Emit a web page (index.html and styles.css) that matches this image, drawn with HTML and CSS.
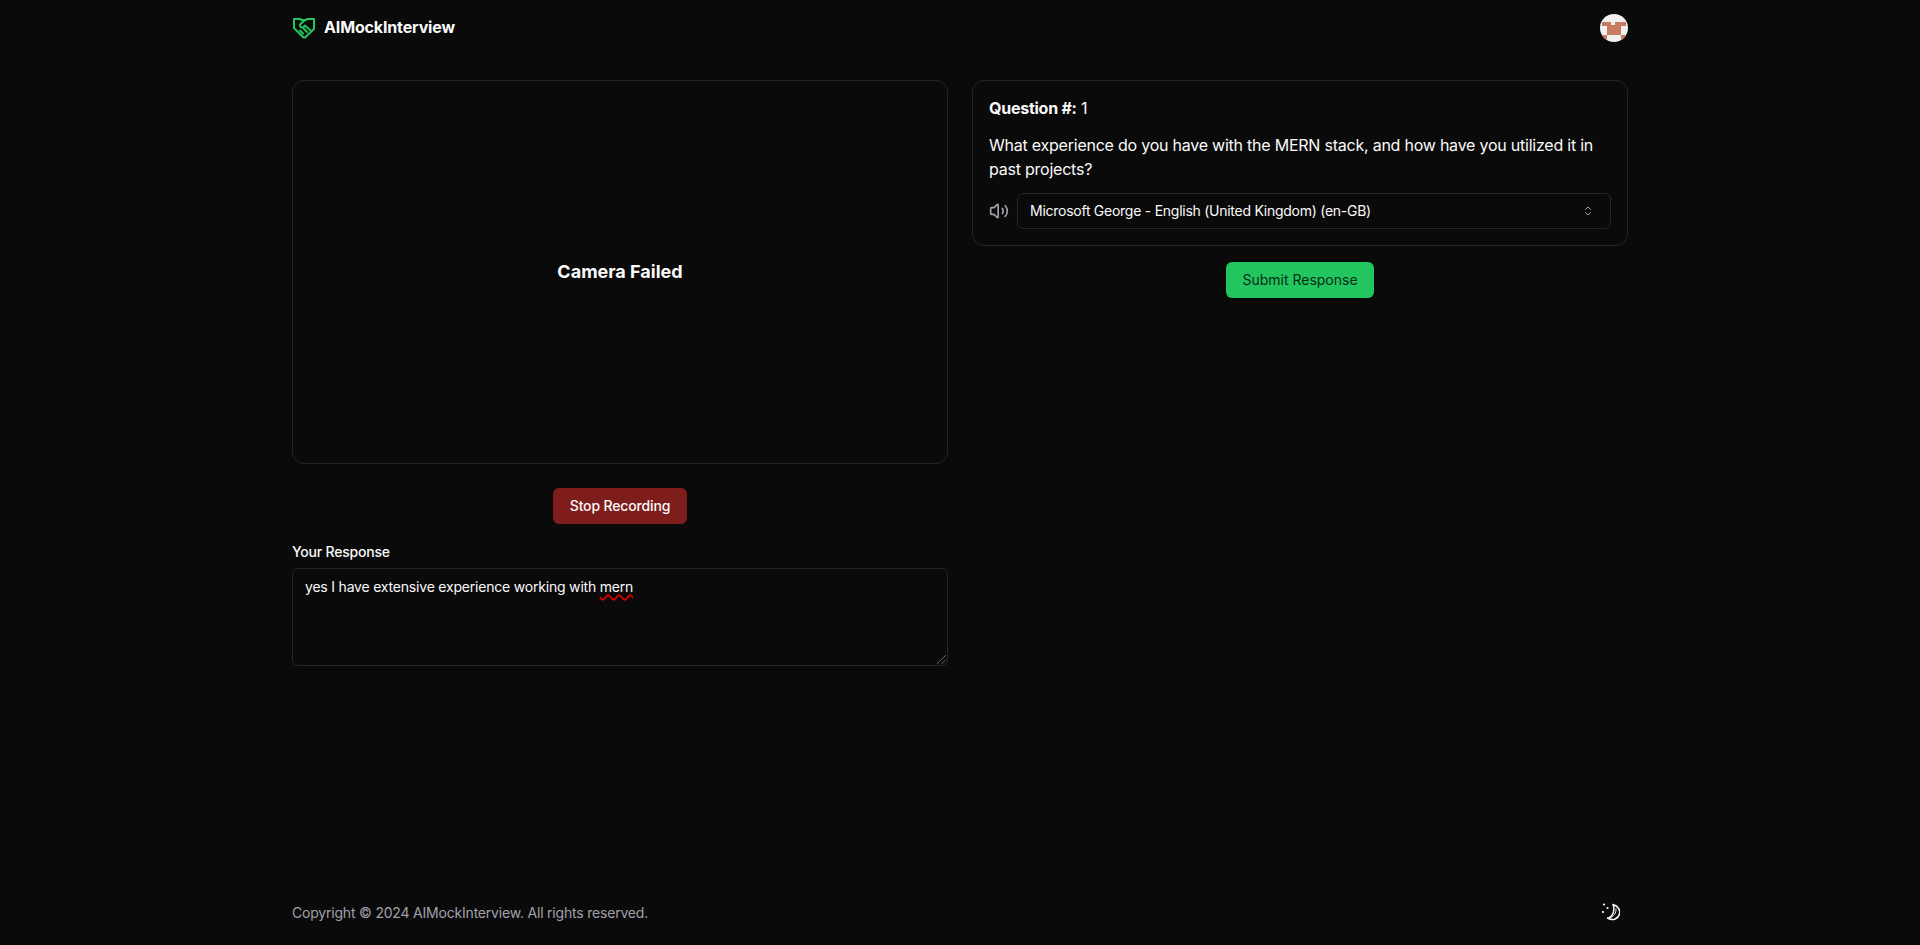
FILE: index.html
```html
<!DOCTYPE html>
<html lang="en">
<head>
<meta charset="utf-8">
<title>AIMockInterview</title>
<link rel="stylesheet" href="styles.css">
</head>
<body>
<div class="page">
  <header class="header">
    <a class="brand">
      <svg class="brand-icon" viewBox="0 0 24 24" fill="none" stroke="#22c55e" stroke-width="2" stroke-linecap="round" stroke-linejoin="round"><path d="M8 3 L2 3 V12 L11.5 21.5 H13 L22 13 V3 H16 L13 4 H10 Z"/><path d="M13 4 L8 8.5 C7.5 9.5 8 11 10 11.5 C11.5 11.5 12.5 10.5 13 9.5 L19 15"/><path d="M8 14.5 L11 17.5 M11.5 12.5 L15 16"/></svg>
      <span class="brand-name">AIMockInterview</span>
    </a>
    <svg class="avatar" viewBox="0 0 28 28"><defs><clipPath id="c"><circle cx="14" cy="14" r="14"/></clipPath></defs><g clip-path="url(#c)"><rect width="28" height="28" fill="#f0f0f0"/><path d="M2 8 H11 V11 H15 V8 H26 V12 H21 V21 H7 V12 H2 Z" fill="#c97b5f"/><path d="M0 21 H7 V28 H0 Z M21 21 H28 V28 H21 Z" fill="#c97b5f"/></g></svg>
  </header>

  <main class="grid">
    <section class="col">
      <div class="camera">Camera Failed</div>
      <div class="center-row stop-row"><button class="btn btn-stop">Stop Recording</button></div>
      <label class="label">Your Response</label>
      <div class="textarea">
        <span>yes I have extensive experience working with <span class="misspelt">mern</span></span>
        <svg class="grip" viewBox="0 0 9 9"><path d="M0.5 8.5 L8.5 0.5 M5 8.5 L8.5 5" stroke="#b5b5b5" stroke-width="1" stroke-dasharray="1 0.5"/></svg>
      </div>
    </section>

    <section class="col">
      <div class="card">
        <div class="q-title"><strong>Question #:</strong> 1</div>
        <p class="q-text">What experience do you have with the MERN stack, and how have you utilized it in past projects?</p>
        <div class="voice-row">
          <svg class="speaker" viewBox="0 0 24 24" fill="none" stroke="#a1a1aa" stroke-width="2" stroke-linecap="round" stroke-linejoin="round"><path d="M11 4.7a.7.7 0 0 0-1.2-.5L6.4 7.6A1.4 1.4 0 0 1 5.4 8H3a1 1 0 0 0-1 1v6a1 1 0 0 0 1 1h2.4a1.4 1.4 0 0 1 1 .4l3.4 3.4a.7.7 0 0 0 1.2-.5z"/><path d="M16 9a5 5 0 0 1 0 6"/><path d="M19.4 18.4a9 9 0 0 0 0-12.7"/></svg>
          <div class="select">
            <span>Microsoft George - English (United Kingdom) (en-GB)</span>
            <svg class="chev" viewBox="0 0 24 24" fill="none" stroke="#a1a1aa" stroke-width="2" stroke-linecap="round" stroke-linejoin="round"><path d="m7 15 5 5 5-5"/><path d="m7 9 5-5 5 5"/></svg>
          </div>
        </div>
      </div>
      <div class="center-row submit-row"><button class="btn btn-submit">Submit Response</button></div>
    </section>
  </main>

  <footer class="footer">
    <span class="copy">Copyright © 2024 AIMockInterview. All rights reserved.</span>
    <svg class="moon" viewBox="0 0 20 20" fill="none" stroke="#fafafa" stroke-linecap="round" stroke-linejoin="round"><path d="M13 2.5 C18 4 20.5 8 19.5 12 C18.5 16.5 13 19.5 7.5 16 C12 15.5 15.5 9 13 2.5 Z" stroke-width="1.5"/><path d="M10 16 C13.5 14.5 16.5 11 16 7" stroke-width="1"/><circle cx="4" cy="2.5" r="1.1" fill="#fafafa" stroke="none"/><circle cx="7.5" cy="6" r="1.1" fill="#fafafa" stroke="none"/><circle cx="3" cy="10" r="1.1" fill="#fafafa" stroke="none"/></svg>
  </footer>
</div>
</body>
</html>
```
FILE: styles.css
```css
* { box-sizing: border-box; }
html, body { margin: 0; height: 100%; }
body {
  background: #0a0a0a;
  color: #fafafa;
  font-family: Inter, "Liberation Sans", sans-serif;
  font-size: 14px;
  line-height: 20px;
  letter-spacing: -0.2px;
}
.page {
  width: 1336px;
  height: 945px;
  margin: 0 auto;
  display: flex;
  flex-direction: column;
}
.header {
  height: 56px;
  display: flex;
  align-items: center;
  justify-content: space-between;
}
.brand { display: flex; align-items: center; gap: 8px; }
.brand-icon { width: 24px; height: 24px; display: block; }
.brand-name { font-size: 16px; line-height: 22px; padding-bottom: 2px; font-weight: 700; letter-spacing: -0.15px; }
.avatar { width: 28px; height: 28px; display: block; }
.grid {
  display: grid;
  grid-template-columns: 1fr 1fr;
  gap: 24px;
  margin-top: 24px;
  flex: 1;
  align-items: start;
}
.col { display: flex; flex-direction: column; }
.camera {
  height: 384px;
  border: 1px solid #262626;
  border-radius: 12px;
  display: flex;
  align-items: center;
  justify-content: center;
  font-size: 18px;
  line-height: 28px;
  font-weight: 700;
  letter-spacing: 0;
}
.center-row { display: flex; justify-content: center; }
.stop-row { margin-top: 24px; }
.submit-row { margin-top: 16px; }
.btn {
  height: 36px;
  padding: 0 16px;
  border: 0;
  border-radius: 6px;
  font-family: inherit;
  font-size: 14px;
  line-height: 20px;
  font-weight: 500;
}
.btn-stop { background: #7f1d1d; color: #fafafa; letter-spacing: -0.15px; padding: 0 17px; }
.btn-submit { background: #22c55e; color: #052e16; font-weight: 400; letter-spacing: 0; }
.label { margin-top: 18px; font-weight: 500; display: block; }
.textarea {
  position: relative;
  margin-top: 6px;
  height: 98px;
  padding: 8px 12px;
  border: 1px solid #262626;
  border-radius: 6px;
}
.misspelt { text-decoration: underline wavy #d00000 1.5px; text-underline-offset: 2px; }
.grip { position: absolute; right: 1px; bottom: 1px; width: 9px; height: 9px; }
.card {
  border: 1px solid #262626;
  border-radius: 12px;
  padding: 15px 16px;
  height: 166px;
}
.q-title { font-size: 16px; line-height: 24px; letter-spacing: -0.25px; }
.q-title strong { font-weight: 700; }
.q-text { margin: 13px 0 0; font-size: 16px; line-height: 24px; letter-spacing: -0.23px; }
.voice-row { display: flex; align-items: center; gap: 8px; margin-top: 12px; }
.speaker { width: 20px; height: 20px; display: block; flex: none; }
.select {
  flex: 1;
  height: 36px;
  padding: 0 12px;
  border: 1px solid #262626;
  border-radius: 6px;
  display: flex;
  align-items: center;
  justify-content: space-between;
  letter-spacing: -0.26px;
}
.chev { width: 12px; height: 12px; margin-right: 4px; }
.footer {
  height: 56px;
  display: flex;
  align-items: center;
  justify-content: space-between;
  margin-bottom: 5px;
}
.copy { color: #a1a1aa; padding-top: 2px; }
.moon { width: 20px; height: 20px; margin-right: 8px; display: block; }
```
